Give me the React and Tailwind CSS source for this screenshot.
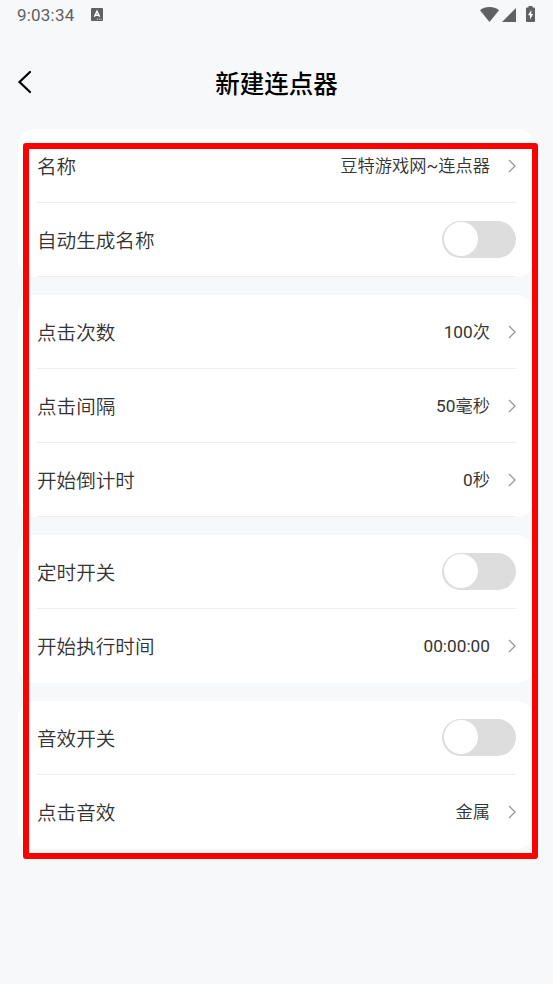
const groups = [
  {
    id: "name",
    endLine: true,
    rows: [
      { label: "名称", value: "豆特游戏网~连点器" },
      { label: "自动生成名称", toggle: true },
    ],
  },
  {
    id: "clicks",
    endLine: true,
    rows: [
      { label: "点击次数", value: "100次" },
      { label: "点击间隔", value: "50毫秒" },
      { label: "开始倒计时", value: "0秒" },
    ],
  },
  {
    id: "timer",
    rows: [
      { label: "定时开关", toggle: true },
      { label: "开始执行时间", value: "00:00:00" },
    ],
  },
  {
    id: "sound",
    rows: [
      { label: "音效开关", toggle: true },
      { label: "点击音效", value: "金属" },
    ],
  },
];

function StatusBar() {
  return (
    <div className="flex h-[30px] items-center justify-between pl-[17px] pr-[18px] text-[#606162]">
      <div className="flex items-center gap-[17px]">
        <span className="text-[17px] leading-[30px] tracking-[0.2px]">9:03:34</span>
        <svg className="-mt-px" width="12" height="13" viewBox="0 0 12 13">
          <rect width="12" height="13" rx="1" fill="currentColor" />
          <path d="M3.4 8.800 6 3.200 8.600 8.800M4.400 7.200h3.200" fill="none" stroke="#fff" strokeWidth="1.500" />
          <path d="M6 11.200h1M7.800 11.200h1M9.600 11.200h1" stroke="#fff" strokeWidth="0.800" />
        </svg>
      </div>
      <div className="flex items-center">
        <svg className="-mt-px" width="19" height="15" viewBox="0 0 19 15" fill="currentColor">
          <path d="M9.500 15 0 3.200C2.500 1.100 5.800 0 9.500 0S16.500 1.100 19 3.200Z" />
        </svg>
        <svg className="ml-[3px]" width="14" height="14" viewBox="0 0 14 14" fill="currentColor">
          <path d="M14 0v14H0Z" />
        </svg>
        <svg className="-mt-[2px] ml-[10px]" width="9" height="16" viewBox="0 0 9 16">
          <path
            d="M2.500 0h4v1.600H8a1 1 0 0 1 1 1V15a1 1 0 0 1-1 1H1a1 1 0 0 1-1-1V2.600a1 1 0 0 1 1-1h1.500Z"
            fill="currentColor"
          />
          <path d="M5.300 4 2 9.300h2V13.500L7.200 8H5.300Z" fill="#fff" />
        </svg>
      </div>
    </div>
  );
}

function Header() {
  return (
    <header className="grid h-[99px] grid-cols-[60px_1fr_60px] items-center">
      <button type="button" className="mt-[5px] pl-[17px]">
        <svg width="16" height="24" viewBox="0 0 16 24" fill="none">
          <path d="M13 2 2.500 12 13 22" stroke="#000" strokeWidth="2.200" strokeLinecap="round" />
        </svg>
      </button>
      <h1 className="mt-[11px] text-center text-[24.5px] font-medium text-black">新建连点器</h1>
    </header>
  );
}

function Toggle() {
  return (
    <button
      type="button"
      role="switch"
      aria-checked="false"
      className="flex h-[37px] w-[74px] items-center rounded-full bg-[#dddddd] pb-px pl-[2px]"
    >
      <span className="h-[34px] w-[34px] rounded-full bg-white" />
    </button>
  );
}

function Row({ row, line }) {
  return (
    <div
      className={`flex h-[74px] items-center justify-between border-b ${
        line ? "border-[#eeeeee]" : "border-transparent"
      }`}
    >
      <span className="pt-[5px] text-[19.6px] font-[350] text-[#333333]">{row.label}</span>
      {row.toggle ? (
        <Toggle />
      ) : (
        <div className="flex items-center gap-[18px]">
          <span className="pt-[3px] font-['Roboto','Noto_Sans_CJK_SC_DemiLight','Noto_Sans_CJK_SC',sans-serif] text-[17.25px] text-[#333333]">
            {row.value}
          </span>
          <svg className="mt-px" width="8" height="14" viewBox="0 0 8 14" fill="none">
            <path d="m1 1 6 6-6 6" stroke="#999999" strokeWidth="1.300" />
          </svg>
        </div>
      )}
    </div>
  );
}

export default function App() {
  return (
    <div className="relative h-[984px] w-[553px] overflow-hidden bg-[#f7f8fa] font-['Roboto','Noto_Sans_CJK_SC',sans-serif]">
      <StatusBar />
      <Header />
      <main className="flex flex-col gap-[18px] px-[18px]">
        {groups.map((group) => (
          <section key={group.id} className="rounded-[18px] bg-white px-[19px]">
            {group.rows.map((row, i) => (
              <Row
                key={row.label}
                row={row}
                line={group.endLine || i < group.rows.length - 1}
              />
            ))}
          </section>
        ))}
      </main>

      {/* Marco rojo sobre los ajustes */}
      <div className="pointer-events-none absolute left-[23px] top-[143px] h-[716px] w-[515px] rounded-[3px] border-[6px] border-[#ff0000]" />
    </div>
  );
}
